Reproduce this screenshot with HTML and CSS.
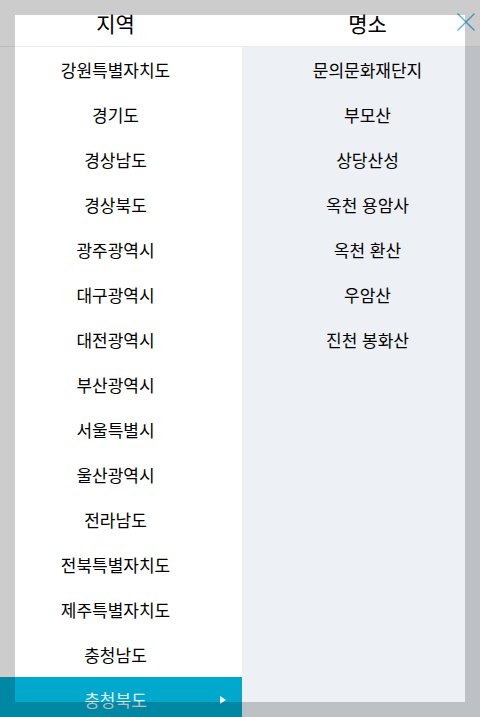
FILE: index.html
```html
<!DOCTYPE html>
<html lang="ko">
<head>
<meta charset="utf-8">
<title>지역 / 명소</title>
<link rel="stylesheet" href="styles.css">
</head>
<body>
<div class="page">
  <header class="head">
    <div class="head-title head-left">지역</div>
    <div class="head-title head-right">명소</div>
  </header>
  <button class="close" aria-label="닫기">
    <svg width="20" height="20" viewBox="0 0 20 20"><path d="M1.5 1.5 L18.5 18.5 M18.5 1.5 L1.5 18.5" stroke="#56b6e0" stroke-width="1.4" fill="none"/></svg>
  </button>
  <div class="cols">
    <ul class="list regions">
      <li>강원특별자치도</li>
      <li>경기도</li>
      <li>경상남도</li>
      <li>경상북도</li>
      <li>광주광역시</li>
      <li>대구광역시</li>
      <li>대전광역시</li>
      <li>부산광역시</li>
      <li>서울특별시</li>
      <li>울산광역시</li>
      <li>전라남도</li>
      <li>전북특별자치도</li>
      <li>제주특별자치도</li>
      <li>충청남도</li>
      <li class="active">충청북도<span class="arrow"></span></li>
    </ul>
    <ul class="list places">
      <li>문의문화재단지</li>
      <li>부모산</li>
      <li>상당산성</li>
      <li>옥천 용암사</li>
      <li>옥천 환산</li>
      <li>우암산</li>
      <li>진천 봉화산</li>
    </ul>
  </div>
</div>
<div class="spotlight"></div>
</body>
</html>
```
FILE: styles.css
```css
* { box-sizing: border-box; }
html, body { margin: 0; padding: 0; }
body {
  width: 480px;
  height: 717px;
  overflow: hidden;
  font-family: "Noto Sans CJK KR", "Noto Sans", sans-serif;
  color: #000;
  background: #fff;
}
.page {
  position: relative;
  height: 717px;
  display: flex;
  flex-direction: column;
}
.head {
  display: grid;
  grid-template-columns: 242px 1fr;
  height: 48px;
  border-bottom: 1px solid #ececec;
}
.head-title {
  font-size: 21px;
  line-height: 46px;
  text-align: center;
  color: #000;
}
.head-left { padding-right: 11px; }
.head-right { padding-left: 13px; }
.close {
  position: absolute;
  top: 12px;
  left: 456px;
  width: 20px;
  height: 20px;
  padding: 0;
  border: 0;
  background: none;
}
.close svg { display: block; }
.cols {
  flex: 1;
  display: grid;
  grid-template-columns: 242px 1fr;
}
.list {
  list-style: none;
  margin: 0;
  padding: 0;
}
.list li {
  height: 45px;
  line-height: 45px;
  font-size: 17px;
  text-align: center;
  white-space: nowrap;
}
.regions { background: #fff; }
.regions li { padding-right: 11px; position: relative; }
.places { background: #edf0f5; }
.places li { padding-left: 13px; }
.regions li.active {
  background: #00a9cc;
  color: #e4eef2;
}
.arrow {
  position: absolute;
  right: 16px;
  top: 19px;
  width: 0;
  height: 0;
  border-top: 4px solid transparent;
  border-bottom: 4px solid transparent;
  border-left: 6px solid #fff;
}
.spotlight {
  position: fixed;
  left: 15px;
  top: 15px;
  width: 450px;
  height: 687px;
  box-shadow: 0 0 0 1000px rgba(0, 0, 0, 0.2);
  pointer-events: none;
}
```
